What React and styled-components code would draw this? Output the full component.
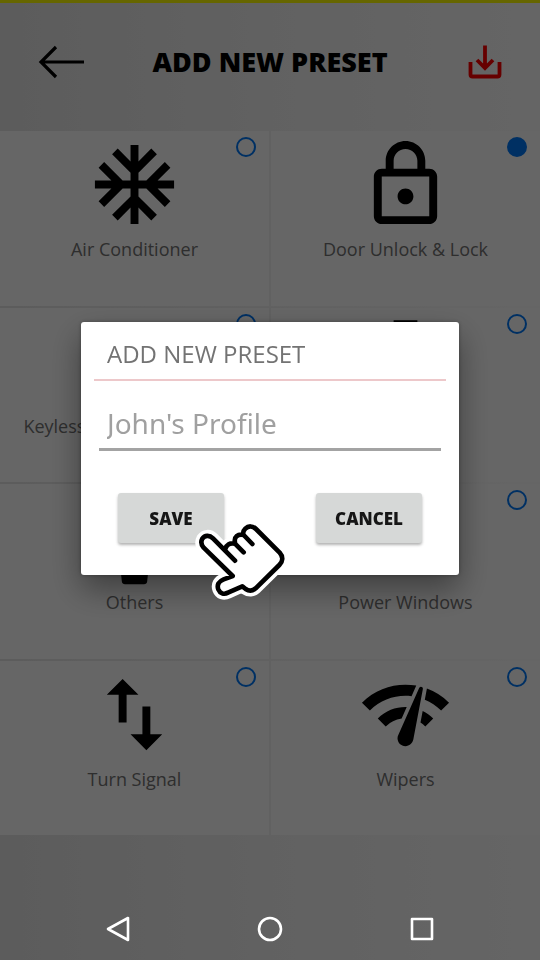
import { useState } from 'react';
import styled, { createGlobalStyle } from 'styled-components';
import { MdAcUnit, MdNetworkCheck, MdOutlineLock, MdSwapVert, MdVpnKey, MdWindow } from 'react-icons/md';

const GlobalStyle = createGlobalStyle`
	* {
		box-sizing: border-box;
	}
	body {
		margin: 0;
		font-family: 'Open Sans', 'Noto Sans', sans-serif;
		color: #737373;
	}
	button {
		font-family: inherit;
		border: 0;
		padding: 0;
		background: none;
		cursor: pointer;
	}
`;

const Page = styled.div`
	min-height: 100vh;
	display: flex;
	flex-direction: column;
	padding-bottom: 125px;
	border-top: 3px solid #ffff00;
	background: linear-gradient(90deg, #e6e6e6, #f3f3f3 50%, #fdfdfd);
`;

const Header = styled.header`
	display: grid;
	grid-template-columns: 1fr auto 1fr;
	align-items: center;
	height: 128px;
	padding: 0 38px 11px;
`;

const Title = styled.h1`
	margin: 0;
	font-size: 27px;
	line-height: 36px;
	font-weight: 800;
	color: #000;
`;

const HeaderButton = styled.button`
	display: flex;
	justify-self: ${(props) => props.$side};
	color: ${(props) => props.$color};
`;

const Grid = styled.main`
	flex: 1;
	display: grid;
	grid-template-columns: 1fr 1fr;
	grid-template-rows: repeat(4, 1fr);
	gap: 2px;
`;

const Tile = styled.label`
	position: relative;
	display: flex;
	flex-direction: column;
	align-items: center;
	gap: 3px;
	min-height: 150px;
	padding-top: 6px;
	background: #fff;
	font-size: 18px;
	line-height: 28px;
	white-space: nowrap;
	& > svg {
		width: 95px;
		height: 95px;
		color: #000;
	}
`;

const Check = styled.input`
	appearance: none;
	position: absolute;
	top: 6px;
	right: 13px;
	width: 20px;
	height: 20px;
	margin: 0;
	border: 2px solid #0078f8;
	border-radius: 50%;
	&:checked {
		background: #0078f8;
	}
`;

const Overlay = styled.div`
	position: fixed;
	inset: 0;
	display: flex;
	align-items: center;
	justify-content: center;
	padding-bottom: 63px;
	background: rgba(0, 0, 0, 0.6);
`;

const Dialog = styled.form`
	position: relative;
	width: 70%;
	padding-bottom: 32px;
	border-radius: 3px;
	background: #fff;
	box-shadow: 0 14px 32px rgba(0, 0, 0, 0.4), 0 0 4px rgba(0, 0, 0, 0.3);
`;

const DialogTitle = styled.h2`
	margin: 0 13px;
	padding: 15px 13px 9px;
	border-bottom: 2px solid #edc8ca;
	font-size: 24px;
	line-height: 33px;
	font-weight: 400;
`;

const Field = styled.div`
	margin: 16px 18px 42px;
`;

const NameInput = styled.input`
	display: block;
	width: 100%;
	height: 54px;
	padding: 0 8px;
	border: 0;
	border-bottom: 3px solid #a3a3a3;
	outline: 0;
	background: none;
	font: 400 28px 'Noto Sans', 'Open Sans', sans-serif;
	color: #737373;
	&::placeholder {
		color: #a0a0a0;
		opacity: 1;
	}
`;

const Actions = styled.div`
	display: flex;
	justify-content: space-between;
	padding: 0 37px;
`;

const ActionButton = styled.button`
	&& {
		width: 106px;
		height: 50px;
		border-radius: 3px;
		background: #d6d8d7;
		box-shadow: 0 2px 3px rgba(0, 0, 0, 0.3);
		font-size: 17px;
		font-weight: 800;
		color: #161616;
	}
`;

const Pointer = styled.svg`
	position: absolute;
	left: 109px;
	top: 193px;
	width: 110px;
	height: 95px;
	pointer-events: none;
`;

const NavBar = styled.nav`
	position: fixed;
	left: 0;
	right: 0;
	bottom: 0;
	display: grid;
	grid-template-columns: repeat(3, 1fr);
	height: 63px;
	padding: 0 42px;
	& button {
		display: flex;
		align-items: center;
		justify-content: center;
	}
	& svg {
		width: 28px;
		height: 28px;
		fill: none;
		stroke: #fff;
		stroke-width: 2.6;
		stroke-linejoin: round;
	}
`;

const HeadlightIcon = () => (
	<svg viewBox="0 0 24 24" fill="currentColor">
		<path d="M9 1.6h6v4h3v10l-3 5H9l-3-5v-10h3z" />
	</svg>
);

const BinIcon = () => (
	<svg viewBox="0 0 24 24" fill="currentColor">
		<path d="M7 6h10l-1.8 17.1q-.1.7-.8.7H9.6q-.7 0-.8-.7zM6 3h12v2H6z" />
	</svg>
);

const presets = [
	{ name: 'Air Conditioner', Icon: MdAcUnit },
	{ name: 'Door Unlock & Lock', Icon: MdOutlineLock, on: true },
	{ name: 'Keyless Entry & Go System', Icon: MdVpnKey },
	{ name: 'Lights', Icon: HeadlightIcon },
	{ name: 'Others', Icon: BinIcon },
	{ name: 'Power Windows', Icon: MdWindow },
	{ name: 'Turn Signal', Icon: MdSwapVert },
	{ name: 'Wipers', Icon: MdNetworkCheck },
];

const hand =
	'M135 137L69 70C58 59 44 61 37 71C32 80 34 90 41 98L128 183L101 193C86 199 80 210 85 223C90 235 101 240 114 233L157 214L167 222C177 229 188 228 197 220L268 150C279 139 280 125 269 113L198 42C188 32 175 32 166 41C160 47 158 54 161 60';
const knuckles = 'M106 102C109 89 120 83 135 86L161 112M135 83C131 65 144 56 161 60L187 87';

export default function App() {
	const [name, setName] = useState('');

	return (
		<>
			<GlobalStyle />
			<Page>
				<Header>
					<HeaderButton $side="start" $color="#000" aria-label="Back">
						<svg width="48" height="34" viewBox="0 0 48 34" fill="none" stroke="currentColor" strokeWidth="3.2">
							<path d="M46 17H4M18 2L3 17l15 15" />
						</svg>
					</HeaderButton>
					<Title>ADD NEW PRESET</Title>
					<HeaderButton $side="end" $color="#ff0000" aria-label="Save preset">
						<svg width="34" height="34" viewBox="0 0 34 34" fill="none" stroke="currentColor" strokeWidth="3.8">
							<path d="M2.5 17v12.5q0 2 2 2h25q2 0 2-2V17" />
							<path d="M17 .5v21M9 15l8 8 8-8" />
						</svg>
					</HeaderButton>
				</Header>
				<Grid>
					{presets.map(({ name, Icon, on }) => (
						<Tile key={name}>
							<Icon />
							{name}
							<Check type="checkbox" defaultChecked={on} />
						</Tile>
					))}
				</Grid>
			</Page>
			<Overlay>
				<Dialog role="dialog" aria-labelledby="dialog-title" onSubmit={(e) => e.preventDefault()}>
					<DialogTitle id="dialog-title">ADD NEW PRESET</DialogTitle>
					<Field>
						<NameInput
							aria-label="Preset name"
							placeholder="John's Profile"
							value={name}
							onChange={(e) => setName(e.target.value)}
						/>
					</Field>
					<Actions>
						<ActionButton type="submit">SAVE</ActionButton>
						<ActionButton type="button">CANCEL</ActionButton>
					</Actions>
					<Pointer viewBox="0 0 330 285" fill="none" strokeLinecap="round" strokeLinejoin="round">
						<path d={hand + knuckles} stroke="#fff" strokeWidth="36" />
						<path d={hand} fill="#fff" />
						<path d={hand + knuckles} stroke="#000" strokeWidth="14" />
					</Pointer>
				</Dialog>
			</Overlay>
			<NavBar>
				<button aria-label="Back">
					<svg viewBox="0 0 28 28">
						<path d="M4 14L24 3v22z" />
					</svg>
				</button>
				<button aria-label="Home">
					<svg viewBox="0 0 28 28">
						<circle cx="14" cy="14" r="11" />
					</svg>
				</button>
				<button aria-label="Recent apps">
					<svg viewBox="0 0 28 28">
						<path d="M4 4h20v20H4z" />
					</svg>
				</button>
			</NavBar>
		</>
	);
}
